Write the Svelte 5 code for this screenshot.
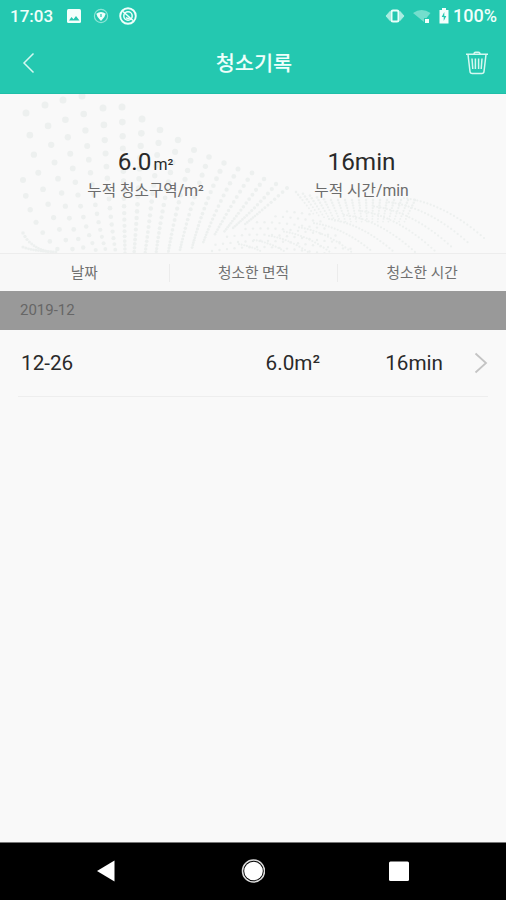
<script lang="ts">
  type Dot = { x: number; y: number; r: number };

  const totals = [
    { value: "6.0", unit: "m²", label: "누적 청소구역/m²" },
    { value: "16min", unit: "", label: "누적 시간/min" },
  ];
  const columns = ["날짜", "청소한 면적", "청소한 시간"];
  const records = [{ date: "12-26", area: "6.0m²", time: "16min" }];

  // start x/y, control x/y, end x/y, first gap, first radius
  const strands = [
    [23, 180, 28, 225, 62, 253, 16, 3],
    [23, 233, 30, 248, 50, 252, 4, 1.8],
    [23, 247, 32, 251, 56, 252, 3, 1.6],
    [26, 113, 43, 220, 77, 254, 22, 3.5],
    [45, 105, 61, 222, 88, 254, 21, 3.5],
    [63, 100, 77, 220, 98, 254, 19.5, 3.5],
    [82, 96, 93, 215, 107, 254, 18, 3.5],
    [103, 108, 108, 210, 116, 254, 16.5, 3.5],
    [122, 107, 124, 200, 125, 254, 15, 3.5],
    [142, 119, 138, 205, 134, 254, 14, 3.5],
    [160, 130, 151, 210, 145, 254, 13, 3.3],
    [178, 140, 162, 205, 156, 254, 12, 3.2],
    [194, 150, 176, 205, 168, 254, 11, 3],
    [209, 157, 190, 205, 180, 250, 10, 2.8],
    [224, 163, 203, 205, 192, 248, 9, 2.7],
    [238, 169, 217, 205, 203, 243, 8.5, 2.5],
    [252, 173, 231, 205, 214, 236, 8, 2.4],
    [264, 179, 245, 205, 224, 232, 7, 2.3],
    [276, 184, 259, 205, 233, 228, 6.5, 2.2],
    [287, 188, 271, 203, 244, 225, 6, 2],
  ];

  function traceStrand([x0, y0, cx, cy, x1, y1, firstGap, firstRadius]: number[]): Dot[] {
    const out: Dot[] = [];
    let gap = firstGap;
    let travelled = 0;
    let next = 0;
    let px = x0;
    let py = y0;
    for (let i = 0; i <= 400; i++) {
      const t = i / 400;
      const x = (1 - t) ** 2 * x0 + 2 * t * (1 - t) * cx + t * t * x1;
      const y = (1 - t) ** 2 * y0 + 2 * t * (1 - t) * cy + t * t * y1;
      travelled += Math.hypot(x - px, y - py);
      if (travelled >= next) {
        out.push({ x, y, r: Math.max(1.3, firstRadius * (0.35 + 0.65 * (gap / firstGap))) });
        next += gap;
        gap = Math.max(2.5, gap * 0.92);
      }
      px = x;
      py = y;
    }
    return out;
  }

  const waves: Dot[] = strands.flatMap(traceStrand);

  // short ribs along the crest of the second wave
  for (let i = 0; i < 18; i++) {
    const x = 296 + i * 7;
    const top = 192 + Math.min(8, i * 1.8);
    const lean = 0.9 - i * 0.085;
    for (let k = 0; k < 9; k++) {
      waves.push({ x: x + lean * k * 2.4, y: top + k * 2.7, r: 1.3 - k * 0.05 });
    }
  }

  // nested arcs falling to the right
  for (let a = 0; a < 12; a++) {
    for (let k = 0; k < 25; k++) {
      const t = k / 24;
      const x = 404 - a * 15 + t * (80 - a * 1.5);
      const y = 198 + a * 4.2 + t * t * 30 + t * 10;
      if (y < 252) waves.push({ x, y, r: 1.1 });
    }
  }

  // sparse grid in the trough between the waves
  for (let row = 0; row < 7; row++) {
    for (let i = 0; i < 20 - row; i++) {
      const x = 212 + i * 7.5 + (row % 2) * 3.5;
      const y = 251 - row * 6.2 - Math.sin(i / 4) * 4;
      if (y + x * 0.45 > 337) waves.push({ x, y, r: 1.2 });
    }
  }
</script>

<div class="screen">
  <header>
    <div class="status">
      <span class="clock">17:03</span>
      <svg class="notices" width="76" height="22" viewBox="0 0 76 22" aria-hidden="true">
        <rect x="3" y="4" width="14" height="14" rx="1.5" fill="#f4fffc" />
        <path d="M5 15.5 7.5 12l2 2.2 2.5-3.2 3.5 4.5z" fill="#24c8b0" />
        <circle cx="37" cy="11" r="6.6" fill="none" stroke="#8de5d6" stroke-width="1.2" />
        <path d="M32.3 8.7q4.7-3.6 9.4 0Q41 12.5 37 16q-4-3.5-4.7-7.3z" fill="#effffb" />
        <path d="M37 9v3" stroke="#24c8b0" stroke-width="1.2" />
        <circle cx="64" cy="11" r="7.8" fill="none" stroke="#effffb" stroke-width="1.9" />
        <circle cx="64" cy="11" r="4.2" fill="none" stroke="#effffb" stroke-width="1.5" />
        <path d="M59 6.5 69 15.5M62 12.5q2 2 4 0" fill="none" stroke="#effffb" stroke-width="1.5" />
      </svg>
      <svg class="radio" width="66" height="22" viewBox="0 0 66 22" aria-hidden="true">
        <path d="M2 11 6 6.5v9zM20 11l-4-4.5v9z" fill="#a9ede1" stroke="#a9ede1" />
        <rect x="7.5" y="5.5" width="7" height="11" rx="1.5" fill="#24c8b0" stroke="#e9fffa" stroke-width="2" />
        <path d="M29 8q8.5-6 17.500 0l-4 5h-2.500v4z" fill="#74decd" />
        <rect x="41" y="14" width="4" height="4" fill="#f4fffc" />
        <path d="M55.500 5h2.500V3h4v2h2.500v13.500h-9z" fill="#f4fffc" />
        <path d="m60.300 7-2.600 5h2v4l2.600-5h-2z" fill="#24c8b0" />
      </svg>
      <span class="battery">100%</span>
    </div>
    <div class="titlebar">
      <button aria-label="back">
        <svg width="14" height="22" viewBox="0 0 14 22">
          <path d="M11.5 1.5 2 11l9.5 9.5" fill="none" stroke="#d5f8f1" stroke-width="1.5" />
        </svg>
      </button>
      <h1>청소기록</h1>
      <button aria-label="delete">
        <svg width="24" height="24" viewBox="0 0 24 24" fill="none" stroke="#d5f8f1" stroke-width="1.5">
          <path d="M1 3.3h22M9 2.500q.2-1.200 1.500-1.200h3q1.300 0 1.500 1.200M3 3.500l2 17q.2 2 2.200 2h9.600q2 0 2.200-2l2-17" />
          <path d="m7 7.500.8 10.500M10.400 7.500V18M13.600 7.500V18M17 7.500 16.200 18" />
        </svg>
      </button>
    </div>
  </header>

  <section class="summary">
    <svg class="waves" width="506" height="159" viewBox="0 94 506 159" aria-hidden="true">
      {#each waves as dot}
        <circle cx={dot.x} cy={dot.y} r={dot.r} />
      {/each}
    </svg>
    {#each totals as total}
      <div class="total">
        <p class="value">{total.value}{#if total.unit}<small>{total.unit}</small>{/if}</p>
        <p class="label">{total.label}</p>
      </div>
    {/each}
  </section>

  <div class="columns">
    {#each columns as column}
      <span>{column}</span>
    {/each}
  </div>

  <div class="month">2019-12</div>

  <main>
    {#each records as record}
      <div class="record">
        <span class="date">{record.date}</span>
        <span class="area">{record.area}</span>
        <span class="time">{record.time}</span>
        <svg width="14" height="22" viewBox="0 0 14 22" aria-hidden="true">
          <path d="M1.5 1.5 12 11 1.5 20.5" fill="none" stroke="#c4c4c4" stroke-width="1.8" />
        </svg>
      </div>
    {/each}
  </main>

  <nav>
    <svg width="24" height="24" viewBox="0 0 24 24"><path d="M3 12 20.5 1.5v21z" fill="#fff" /></svg>
    <svg width="24" height="24" viewBox="0 0 24 24">
      <circle cx="12.5" cy="12" r="11" fill="none" stroke="#ddd" stroke-width="1.5" />
      <circle cx="12.5" cy="12" r="9.3" fill="#fff" />
    </svg>
    <svg width="24" height="24" viewBox="0 0 24 24"><rect x="2" y="2.5" width="20" height="19.5" rx="1.5" fill="#fff" /></svg>
  </nav>
</div>

<style>
  :global(body) {
    margin: 0;
  }

  .screen {
    height: 900px;
    display: flex;
    flex-direction: column;
    overflow: hidden;
    background: #f9f9f9;
    color: #2a2a2a;
    font-family: Roboto, "Noto Sans CJK KR", sans-serif;
  }

  header {
    flex: none;
    height: 94px;
    box-sizing: border-box;
    border-bottom: 1px solid #1fbfa8;
    background: #24c8b0;
    color: #effffb;
  }

  .status {
    height: 31px;
    display: flex;
    align-items: center;
    padding: 0 9px 0 10px;
    font-size: 17px;
    font-weight: 500;
  }

  .clock {
    width: 54px;
  }

  .radio {
    margin-left: auto;
    margin-right: 3px;
  }

  .battery {
    width: 44px;
    white-space: nowrap;
    font-size: 18px;
  }

  .titlebar {
    height: 63px;
    display: grid;
    grid-template-columns: 60px 1fr 60px;
    align-items: center;
  }

  button {
    display: flex;
    margin: 0;
    padding: 0 0 0 22px;
    border: 0;
    background: none;
  }

  button:last-child {
    padding: 0 0 0 19px;
  }

  h1 {
    margin: 0;
    padding: 2px 0 0 2px;
    text-align: center;
    font-size: 20.8px;
    font-weight: 500;
    line-height: 30px;
  }

  .summary {
    position: relative;
    flex: none;
    height: 159px;
    display: grid;
    grid-template-columns: 291px 141px;
    box-sizing: border-box;
    padding-top: 52px;
    background: #f9f9f9;
  }

  .waves {
    position: absolute;
    inset: 0;
    fill: #edf0ef;
  }

  .total {
    position: relative;
    text-align: center;
    white-space: nowrap;
  }

  .value,
  .label {
    margin: 0;
  }

  .value {
    height: 32px;
    font-size: 24.3px;
    line-height: 32px;
  }

  .value small {
    margin-left: 2px;
    font-size: 16px;
  }

  .label {
    color: #6c6c6c;
    font-size: 15.7px;
    line-height: 25px;
  }

  .columns {
    flex: none;
    height: 38px;
    display: grid;
    grid-template-columns: repeat(3, 1fr);
    align-items: center;
    box-sizing: border-box;
    border-top: 1px solid #ededed;
    background: #f8f8f8;
    color: #707070;
    font-size: 14.7px;
    text-align: center;
  }

  .columns span {
    height: 18px;
    line-height: 18px;
  }

  .columns span + span {
    border-left: 1px solid #ececec;
  }

  .month {
    flex: none;
    height: 39px;
    padding-left: 20px;
    background: #999;
    color: #666;
    font-size: 15px;
    line-height: 38px;
  }

  main {
    flex: 1;
  }

  .record {
    height: 66px;
    display: grid;
    grid-template-columns: 150px 149px 123px 1fr;
    align-items: center;
    margin: 0 18px;
    padding-left: 3px;
    border-bottom: 1px solid #eee;
    font-size: 20.7px;
  }

  .area,
  .time {
    text-align: right;
  }

  .record svg {
    justify-self: end;
  }

  nav {
    flex: none;
    height: 58px;
    display: flex;
    align-items: center;
    justify-content: space-between;
    box-sizing: border-box;
    padding: 0 95px 1px 94px;
    border-top: 1px solid #777;
    background: #000;
  }
</style>
